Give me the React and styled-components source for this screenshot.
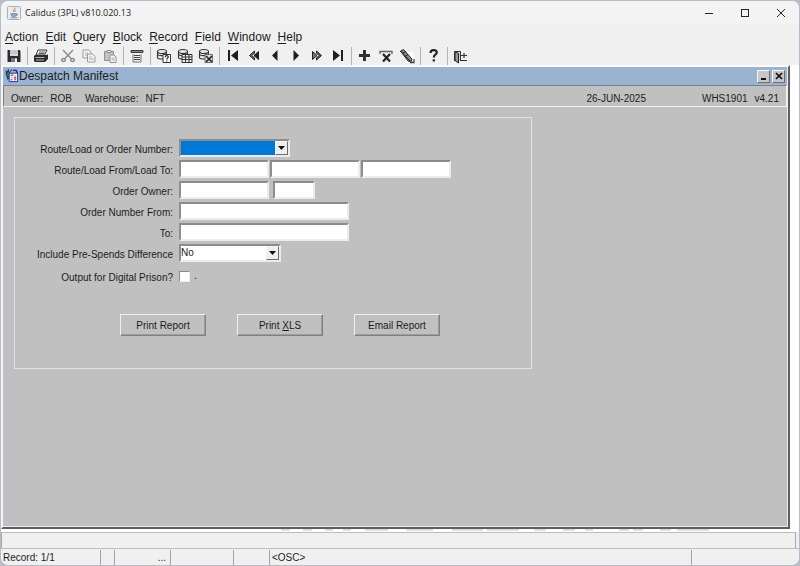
import React, { useState } from "react";
import styled, { createGlobalStyle, css } from "styled-components";

const GlobalStyle = createGlobalStyle`
    * {
        box-sizing: border-box;
    }

    body {
        margin: 0;
        background: #b9bcc8;
        color: #1c1c1c;
        font-family: "Liberation Sans", Arial, sans-serif;
        font-size: 10px;
        line-height: 12px;
    }

    button,
    input,
    select {
        margin: 0;
        padding: 0;
        color: inherit;
        font: inherit;
        border-radius: 0;
    }
`;

const raised = css`
    border: 1px solid;
    border-color: #f4f4f4 #6e6e6e #6e6e6e #f4f4f4;
`;

const sunken = css`
    border: 2px solid;
    border-color: #8c8c8c #ececec #ececec #8e8e8e;
`;

/* ---------- toolbar drawings, all on a 16 x 16 grid ---------- */

const Disk = () => (
    <>
        <path d="M1.500 2h12l1 1v11h-13z" fill="#2c2c2c" />
        <path d="M4 2h8v6H4z" fill="#d8d8d8" />
        <path d="M4 3h8M4 5h8" stroke="#a9a9a9" strokeWidth=".7" />
        <path d="M5 10h6v4H5z" fill="#777" />
        <path d="M9 10.500h2V14H9z" fill="#f4f4f4" />
    </>
);

const Printer = () => (
    <>
        <path d="M5 2h9l-2.500 5H3z" fill="#fff" stroke="#333" />
        <path d="M6 4h6M5.300 5.500h6" stroke="#333" strokeWidth=".8" />
        <path d="M2 7h12l1-1v5l-3 3H2l-1-1V8z" fill="#2a2a2a" />
        <path d="M2.500 9.500h9M3 12h8" stroke="#c4c4c4" strokeWidth=".9" />
    </>
);

const Scissors = () => (
    <g fill="none" stroke="#8c8c8c" strokeWidth="1.400">
        <path d="M3 2l8.500 9M13 2L4.500 11" />
        <ellipse cx="3.500" cy="12" rx="1.800" ry="1.500" />
        <ellipse cx="12.500" cy="12" rx="1.800" ry="1.500" />
    </g>
);

const Copy = () => (
    <g fill="#f5f5f5" stroke="#9b9b9b">
        <path d="M2 2h6l2 2v6H2z" />
        <path d="M6.500 6h5l2.500 2.500V14H6.500z" />
        <path d="M8 9h3M8 11h5M4 5h3M4 7h2" strokeWidth=".8" />
    </g>
);

const Paste = () => (
    <g stroke="#909090">
        <path d="M2.500 3.500h9v9h-9z" fill="#c3c3c3" />
        <path d="M5 2.500h4v2H5z" fill="#eee" />
        <path d="M8 7h4l2 2v5.500H8z" fill="#f8f8f8" />
        <path d="M9.500 10h3M9.500 12h3" strokeWidth=".8" />
    </g>
);

const ListBox = () => (
    <>
        <path d="M2 2.500h12v2H2z" fill="#8a8a8a" stroke="#3a3a3a" />
        <path d="M4 6v8h8V6" fill="#f2f2f2" stroke="#777" />
        <path d="M5 7.500h6M5 9.500h6M5 11.500h6" stroke="#444" />
    </>
);

const Cylinder = () => (
    <g fill="#e6e6e6" stroke="#333" strokeWidth="1.100">
        <path d="M1.500 3.500v6c0 2 9 2 9 0v-6" />
        <ellipse cx="6" cy="3.500" rx="4.500" ry="2" />
        <path d="M1.500 6.500c1 1.500 8 1.500 9 0" fill="none" />
    </g>
);

const EnterQuery = () => (
    <>
        <Cylinder />
        <path d="M7 6.500h7.500v8H7z" fill="#fff" stroke="#333" />
        <path d="M9.200 9.200c0-2 3.100-1.900 3.100-.2 0 1.200-1.500 1-1.500 2.500M10.800 12.500v1" fill="none" stroke="#222" strokeWidth="1.200" />
    </>
);

const ExecuteQuery = () => (
    <>
        <Cylinder />
        <path d="M5 6.500h10v8H5z" fill="#eee" stroke="#333" />
        <path d="M5 9h10M5 11.500h10M8.500 7v7M12 7v7" stroke="#333" />
    </>
);

const CancelQuery = () => (
    <>
        <Cylinder />
        <path d="M7 6.500h7.500v8H7z" fill="#ddd" stroke="#555" strokeWidth=".8" />
        <path d="M8 8l6 6M14 8l-6 6" stroke="#222" strokeWidth="1.600" />
    </>
);

const First = () => <path d="M3 2h2v11H3zM13 2v11L6 7.500z" fill="#1f1f1f" />;
const Last = () => <path d="M11 2h2v11h-2zM3 2v11l7-5.500z" fill="#1f1f1f" />;
const Previous = () => <path d="M10.500 2v11L5 7.500z" fill="#1f1f1f" />;
const Next = () => <path d="M5.500 2v11L11 7.500z" fill="#1f1f1f" />;

const PreviousSet = () => (
    <g stroke="#1f1f1f">
        <path d="M12.500 3.500v8L8 7.500z" fill="#1f1f1f" />
        <path d="M8.500 3v2L6 7.500 8.500 10v2L3.500 7.500z" fill="#777" />
    </g>
);

const NextSet = () => (
    <g stroke="#1f1f1f">
        <path d="M3.500 3.500v8L8 7.500z" fill="#777" />
        <path d="M7.500 3v2L10 7.500 7.500 10v2l5-4.500z" fill="#666" />
    </g>
);

const Plus = () => <path d="M6 2h3v4h4v3H9v4H6V9H2V6h4z" fill="#303030" />;

const Remove = () => (
    <>
        <path d="M2 6V3.500h12V6M2 3.500h12" fill="none" stroke="#666" strokeWidth="1.400" />
        <path d="M5 6l7 7.500M12 6l-7 7.500" stroke="#222" strokeWidth="2.200" />
    </>
);

const Lock = () => (
    <>
        <path d="M7 4h7.500v10.500H7z" fill="#fff" />
        <path d="M1.500 3l3-1.500L13 11l-1 3-3-1z" fill="#888" stroke="#2b2b2b" />
        <path d="M1.500 3L11 13M4 5l3-1.500M6.500 8L9 6.500" stroke="#222" />
        <path d="M11 14.500h4V11" fill="none" stroke="#444" strokeWidth="1.300" />
    </>
);

const Question = () => (
    <g fill="none" stroke="#222" strokeWidth="2.200">
        <path d="M4.500 5C4.500 1 11 1.300 10.800 4.500c-.1 2-3 2.200-3 5" />
        <path d="M7.800 11.300v2.200" />
    </g>
);

const Exit = () => (
    <>
        <path d="M1.500 13V3.500h6V13" fill="#ddd" stroke="#333" />
        <path d="M2 3.500l3.500 2V15L2 12.500z" fill="#999" stroke="#222" />
        <path d="M8 7.500h6M11 5v5M8 12.500h6" stroke="#333" strokeWidth="1.200" />
    </>
);

const toolGroups = [
    [["Save", Disk]],
    [["Print", Printer]],
    [["Cut", Scissors], ["Copy", Copy], ["Paste", Paste]],
    [["List of values", ListBox]],
    [["Enter query", EnterQuery], ["Execute query", ExecuteQuery], ["Cancel query", CancelQuery]],
    [
        ["First record", First],
        ["Previous set", PreviousSet],
        ["Previous record", Previous],
        ["Next record", Next],
        ["Next set", NextSet],
        ["Last record", Last],
    ],
    [["Insert record", Plus], ["Remove record", Remove], ["Lock record", Lock]],
    [["Help", Question]],
    [["Exit", Exit]],
];

const menus = ["Action", "Edit", "Query", "Block", "Record", "Field", "Window", "Help"];

const JavaIcon = () => (
    <svg width="14" height="14" viewBox="0 0 14 14" aria-hidden="true">
        <rect x=".5" y=".5" width="13" height="13" rx="1" fill="#e9edf1" stroke="#a8b2bb" />
        <path d="M7.500 1.500c1 2-2 2.500-.8 4.500M9 3.500C7.500 4.500 7.700 5 8.300 6" fill="none" stroke="#dd7a4c" />
        <path d="M4 7.500h5.500v1.500c0 2-5.500 2-5.500 0zM3.500 11.800h7" fill="#8fabc0" stroke="#7895ab" />
        <path d="M9.500 8c2 0 1 1.500 0 1.500" fill="none" stroke="#7895ab" />
    </svg>
);

const FormIcon = () => (
    <svg width="14" height="14" viewBox="0 0 15 15" aria-hidden="true">
        <path d="M.5 2l3 1.500M3.500 0v3M7 .5L6 3" stroke="#1a1a1a" />
        <path d="M1 4l3-1.500L6 5l-1 4-2 2z" fill="#1b7f8c" stroke="#111" strokeWidth=".8" />
        <path d="M4.500 4.500h9v9h-9z" fill="#fff" stroke="#2227a8" />
        <path d="M8.500 1.500H12l1.500 3" fill="none" stroke="#1b1fb0" strokeWidth="1.500" />
        <path d="M6 6.500h3M9.500 11.500H12" stroke="#d12c2c" strokeWidth="1.300" />
        <path d="M10 7.500h2M6 9h2.500" stroke="#e8b52e" strokeWidth="1.500" />
        <path d="M6 11.500h2M9.500 9.500H12" stroke="#2838d0" strokeWidth="1.300" />
    </svg>
);

// Bottom edge of the lettering that shows under the form window
const watermark = [
    [281, 9], [303, 9], [325, 8], [343, 8], [365, 23], [406, 27], [452, 31], [487, 32],
    [534, 12], [563, 12], [585, 8], [619, 10], [633, 10], [660, 11], [677, 32],
];

const Mnemonic = ({ text, at = 0 }) => (
    <>
        {text.slice(0, at)}
        <u>{text[at]}</u>
        {text.slice(at + 1)}
    </>
);

const Combo = ({ id, options, width, selected }) => {
    const [value, setValue] = useState(options[0]);

    return (
        <ComboBox $width={width}>
            <ComboSelect id={id} value={value} $selected={selected} onChange={e => setValue(e.target.value)}>
                {options.map(option => (
                    <option key={option}>{option}</option>
                ))}
            </ComboSelect>
            <ComboArrow aria-hidden="true">
                <svg width="7" height="4" viewBox="0 0 7 4">
                    <path d="M0 0h7L3.500 4z" fill="#111" />
                </svg>
            </ComboArrow>
        </ComboBox>
    );
};

export default function App() {
    return (
        <Desktop>
            <GlobalStyle />
            <Frame>
                <TitleBar>
                    <JavaIcon />
                    <AppTitle>Calidus (3PL) v810.020.13</AppTitle>
                    <CaptionButton aria-label="Minimize">
                        <svg width="10" height="10" viewBox="0 0 10 10">
                            <path d="M1 5.500h8" stroke="#222" />
                        </svg>
                    </CaptionButton>
                    <CaptionButton aria-label="Maximize">
                        <svg width="10" height="10" viewBox="0 0 10 10">
                            <rect x="1.500" y="1.500" width="7" height="7" fill="none" stroke="#222" />
                        </svg>
                    </CaptionButton>
                    <CaptionButton aria-label="Close">
                        <svg width="10" height="10" viewBox="0 0 10 10">
                            <path d="M1 1l8 8M9 1L1 9" stroke="#222" />
                        </svg>
                    </CaptionButton>
                </TitleBar>

                <MenuBar>
                    {menus.map(menu => (
                        <MenuButton key={menu}>
                            <Mnemonic text={menu} />
                        </MenuButton>
                    ))}
                </MenuBar>

                <Toolbar>
                    {toolGroups.map((group, i) => (
                        <ToolGroup key={i}>
                            {group.map(([name, Icon]) => (
                                <ToolButton key={name} aria-label={name}>
                                    <svg width="16" height="16" viewBox="0 0 16 16">
                                        <Icon />
                                    </svg>
                                </ToolButton>
                            ))}
                        </ToolGroup>
                    ))}
                </Toolbar>

                <Workspace>
                    <FormWindow>
                        <FormTitle>
                            <FormIcon />
                            <FormName>Despatch Manifest</FormName>
                            <SmallButton aria-label="Minimize form">
                                <svg width="10" height="10" viewBox="0 0 10 10">
                                    <path d="M2 8h5" stroke="#111" strokeWidth="2" />
                                </svg>
                            </SmallButton>
                            <SmallButton aria-label="Close form">
                                <svg width="10" height="10" viewBox="0 0 10 10">
                                    <path d="M2 2l6 6M8 2L2 8" stroke="#111" strokeWidth="1.700" />
                                </svg>
                            </SmallButton>
                        </FormTitle>

                        <InfoBar>
                            <InfoPair>
                                <span>Owner:</span>
                                <span>ROB</span>
                            </InfoPair>
                            <InfoPair>
                                <span>Warehouse:</span>
                                <span>NFT</span>
                            </InfoPair>
                            <InfoDate>26-JUN-2025</InfoDate>
                            <InfoPair>
                                <span>WHS1901</span>
                                <span>v4.21</span>
                            </InfoPair>
                        </InfoBar>

                        <FormBody>
                            <Panel onSubmit={e => e.preventDefault()}>
                                <Fields>
                                    <Label htmlFor="number">Route/Load or Order Number:</Label>
                                    <Combo id="number" options={[""]} width={111} selected />

                                    <Label htmlFor="route">Route/Load From/Load To:</Label>
                                    <FieldGroup $gap={1}>
                                        <TextBox id="route" $width={90} />
                                        <TextBox aria-label="Load from" $width={90} />
                                        <TextBox aria-label="Load to" $width={90} />
                                    </FieldGroup>

                                    <Label htmlFor="owner">Order Owner:</Label>
                                    <FieldGroup $gap={4}>
                                        <TextBox id="owner" $width={90} />
                                        <TextBox aria-label="Owner code" $width={42} />
                                    </FieldGroup>

                                    <Label htmlFor="from">Order Number From:</Label>
                                    <TextBox id="from" $width={170} />

                                    <Label htmlFor="to">To:</Label>
                                    <TextBox id="to" $width={170} />

                                    <Label htmlFor="difference">Include Pre-Spends Difference</Label>
                                    <Combo id="difference" options={["No", "Yes"]} width={102} />

                                    <Label htmlFor="prison">Output for Digital Prison?</Label>
                                    <FieldGroup $gap={4}>
                                        <CheckBox id="prison" type="checkbox" />
                                        <span>.</span>
                                    </FieldGroup>
                                </Fields>

                                <Actions>
                                    <ActionButton>Print Report</ActionButton>
                                    <ActionButton>
                                        <Mnemonic text="Print XLS" at={6} />
                                    </ActionButton>
                                    <ActionButton>Email Report</ActionButton>
                                </Actions>
                            </Panel>
                        </FormBody>
                    </FormWindow>
                    <Watermark width="798" height="3" viewBox="1 0 798 3" aria-hidden="true">
                        {watermark.map(([x, width]) => (
                            <rect key={x} x={x} y="0" width={width} height="2" fill="#dedede" />
                        ))}
                    </Watermark>
                </Workspace>

                <MessageLine>
                    <Message />
                </MessageLine>
                <StatusBar>
                    <StatusCell $width={99}>Record: 1/1</StatusCell>
                    <StatusCell $width={14} />
                    <StatusCell $width={56} $right>...</StatusCell>
                    <StatusCell $width={63} />
                    <StatusCell $width={36} />
                    <StatusCell>&lt;OSC&gt;</StatusCell>
                    <StatusCell $width={108} />
                </StatusBar>
            </Frame>
        </Desktop>
    );
}

const Desktop = styled.div`
    display: flex;
    min-height: 100vh;
    padding: 1px;
`;

const Frame = styled.div`
    flex: 1;
    min-width: 0;
    display: flex;
    flex-direction: column;
    overflow: hidden;
    background: #f0f0f0;
    border-radius: 7px;
`;

const TitleBar = styled.header`
    display: flex;
    align-items: center;
    height: 24px;
    padding-left: 6px;
    background: #f3f3f3;
`;

const AppTitle = styled.h1`
    flex: 1;
    margin: 0 0 0 4px;
    font-family: "Open Sans", "Noto Sans", sans-serif;
    font-size: 9px;
    font-weight: 400;
    line-height: 12px;
`;

const CaptionButton = styled.button`
    display: flex;
    align-items: center;
    justify-content: center;
    width: 36px;
    height: 24px;
    border: 0;
    background: none;
`;

const MenuBar = styled.nav`
    display: flex;
    align-items: center;
    gap: 7px;
    height: 22px;
    padding-top: 2px;
    padding-left: 4px;
`;

const MenuButton = styled.button`
    border: 0;
    background: none;
    font-size: 12px;
    line-height: 16px;

    & u {
        text-underline-offset: 2px;
    }
`;

const Toolbar = styled.div`
    display: flex;
    height: 18px;
    padding-left: 2px;
`;

const ToolGroup = styled.div`
    display: flex;

    & + & {
        margin-left: 3px;
        padding-left: 2px;
        border-left: 1px solid #b4b4b4;
    }
`;

const ToolButton = styled.button`
    display: flex;
    align-items: center;
    justify-content: center;
    width: 21px;
    height: 18px;
    border: 0;
    background: none;
`;

const Workspace = styled.main`
    flex: 1;
    display: flex;
    flex-direction: column;
    background: #fff;
`;

const FormWindow = styled.section`
    flex: 1;
    display: flex;
    flex-direction: column;
    margin-right: 9px;
    border: 2px solid;
    border-color: #fafafa #5e5e5e #5e5e5e #f4f4f4;
    background: #c0c0c0;
    box-shadow: inset -1px -1px #ececec;
`;

const FormTitle = styled.div`
    display: flex;
    align-items: center;
    height: 18px;
    margin-right: 1px;
    padding: 0 2px;
    background: #99b3d1;
`;

const FormName = styled.h2`
    flex: 1;
    margin: 0;
    font-size: 12px;
    font-weight: 400;
    line-height: 16px;
`;

const SmallButton = styled.button`
    display: flex;
    align-items: center;
    justify-content: center;
    width: 13px;
    height: 13px;
    background: #c6c6c6;
    ${raised}

    & + & {
        margin-left: 2px;
    }
`;

const InfoBar = styled.div`
    display: flex;
    gap: 13px;
    height: 22px;
    margin-right: 1px;
    padding: 7px 7px 0;
    border: 1px solid;
    border-color: #808080 #f4f4f4 #f4f4f4 #808080;
`;

const InfoPair = styled.div`
    display: flex;
    gap: 7px;
`;

const InfoDate = styled.span`
    margin-left: auto;
    margin-right: 43px;
`;

const FormBody = styled.div`
    flex: 1;
    padding: 10px 11px;
`;

const Panel = styled.form`
    max-width: 518px;
    padding: 21px 0 32px;
    border: 1px solid #e2e2e2;
`;

const Fields = styled.div`
    display: grid;
    grid-template-columns: 158px 1fr;
    grid-template-rows: repeat(6, 18px) 22px;
    align-items: center;
    gap: 3px 6px;
`;

const Label = styled.label`
    padding-top: 4px;
    text-align: right;
    white-space: nowrap;
`;

const FieldGroup = styled.div`
    display: flex;
    align-items: center;
    gap: ${({ $gap }) => $gap}px;
`;

const TextBox = styled.input`
    width: ${({ $width }) => $width}px;
    height: 18px;
    background: #fff;
    outline: 0;
    ${sunken}
`;

const ComboBox = styled.div`
    position: relative;
    width: ${({ $width }) => $width}px;
    height: 18px;
    ${sunken}
`;

const ComboSelect = styled.select`
    display: block;
    appearance: none;
    width: 100%;
    height: 14px;
    border: 0;
    outline: 0;
    background: ${({ $selected }) => ($selected ? "#0078d7" : "#fff")};
`;

const ComboArrow = styled.span`
    position: absolute;
    top: 0;
    right: 0;
    bottom: 0;
    display: flex;
    align-items: center;
    justify-content: center;
    width: 13px;
    background: #efefef;
    pointer-events: none;
    ${raised}
`;

const CheckBox = styled.input`
    appearance: none;
    width: 11px;
    height: 11px;
    background: #fff;
    border: 1px solid;
    border-color: #8c8c8c #ececec #ececec #8c8c8c;

    &:checked {
        background: #333;
    }
`;

const Actions = styled.div`
    display: flex;
    gap: 31px;
    margin-top: 27px;
    padding-left: 105px;
`;

const ActionButton = styled.button`
    width: 86px;
    height: 22px;
    padding-top: 2px;
    background: #c0c0c0;
    border: 1px solid;
    border-color: #f0f0f0 #808080 #808080 #f0f0f0;
    box-shadow: inset -1px -1px #9c9c9c;

    & u {
        text-underline-offset: 1px;
    }
`;

const Watermark = styled.svg`
    display: block;
`;

const MessageLine = styled.div`
    height: 17px;
    padding-right: 3px;
    border-bottom: 1px solid #bcbcbc;
`;

const Message = styled.div`
    height: 16px;
    border-top: 1px solid #bcbcbc;
    border-right: 1px solid #a8a8a8;
    border-left: 1px solid #a8a8a8;
`;

const StatusBar = styled.footer`
    display: flex;
    height: 16px;
    padding-top: 1px;
`;

const StatusCell = styled.div`
    flex: ${({ $width }) => ($width ? `0 0 ${$width}px` : "1")};
    padding: 2px 4px 0 2px;
    text-align: ${({ $right }) => ($right ? "right" : "left")};

    & + & {
        border-left: 1px solid #a4a4a4;
    }
`;
